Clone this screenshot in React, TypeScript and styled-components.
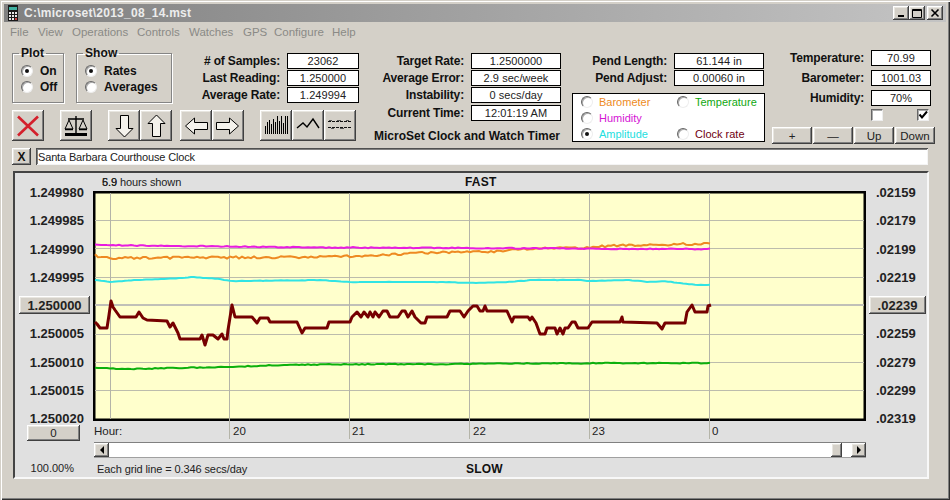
import React from "react";
import styled, { createGlobalStyle } from "styled-components";

const Global = createGlobalStyle`
  html, body { margin: 0; padding: 0; background: #d4d0c8; overflow: hidden; }
  * { box-sizing: border-box; }
  body { font-family: "Liberation Sans", Arial, sans-serif; font-size: 11px; color: #111; }
`;

const raised = `box-shadow: inset -1px -1px #404040, inset 1px 1px #fff, inset -2px -2px #808080, inset 2px 2px #e8e6e0;`;
const sunken = `box-shadow: inset 1px 1px #505050, inset -1px -1px #f4f4f4, inset 2px 2px #808080;`;

const Win = styled.div`
  width: 950px; height: 500px; padding: 4px 0 0 4px; background: #d4d0c8; overflow: hidden;
  box-shadow: inset 1px 1px #d4d0c8, inset 2px 2px #fff, inset -1px -1px #303030, inset -2px -2px #808080;
`;
const TitleBar = styled.div`
  width: 942px; height: 18px; display: flex; align-items: center; padding: 0 3px 0 3px;
  background: linear-gradient(90deg, #808080, #c4c4c4);
`;
const TitleText = styled.span`
  margin-left: 5px; flex: 1; color: #ececec; font-weight: 700; font-size: 12px; letter-spacing: .25px;
`;
const WinBtn = styled.button<{ $ml?: number }>`
  width: 16px; height: 14px; margin-left: ${p => p.$ml ?? 0}px; padding: 0; border: 0; background: #d4d0c8; ${raised}
  display: flex; align-items: center; justify-content: center;
`;
const MenuBar = styled.div`
  height: 19px; display: flex; align-items: center; margin-left: 6px; color: #8a8a86; font-size: 11.5px;
`;
const MenuItem = styled.span<{ $w: number }>` width: ${p => p.$w}px; `;

const Top = styled.div`
  height: 107px; padding-top: 9px; padding-left: 8px; display: flex; align-items: flex-start;
`;
const LeftCol = styled.div` width: 347px; padding-top: 3px; `;
const FormRow = styled.div` display: flex; align-items: flex-start; `;
const Group = styled.fieldset<{ $w: number }>`
  width: ${p => p.$w}px; height: 56px; margin: -6px 12px 0 0; padding: 3px 0 0 8px; min-width: 0;
  border: 1px solid #858585; box-shadow: 1px 1px #fff, inset 1px 1px #fff;
`;
const Legend = styled.legend`
  margin-left: -2px; padding: 0 2px; font-weight: 700; font-size: 12px; line-height: 13px; letter-spacing: .1px;
`;
const RadioRow = styled.label`
  display: flex; align-items: center; gap: 7px; height: 16px; font-weight: 700; font-size: 12px;
`;
const Radio = styled.span<{ $on?: boolean }>`
  width: 12px; height: 12px; border-radius: 50%; background: #fff; flex: none; display: flex; align-items: center; justify-content: center;
  border: 1px solid; border-color: #666 #eee #eee #666; box-shadow: inset 1px 1px #aaa;
  &::after { content: ""; width: 4px; height: 4px; border-radius: 50%; background: ${p => (p.$on ? "#111" : "transparent")}; }
`;
const Stats = styled.div` margin-left: -12px; flex: 1; `;
const Field = styled.div<{ $mt?: number }>`
  display: flex; justify-content: flex-end; align-items: center; gap: 7px; height: 16px; margin-top: ${p => p.$mt ?? 0}px;
`;
const Label = styled.span` font-weight: 700; font-size: 12px; white-space: nowrap; letter-spacing: -.15px; padding-bottom: 1px; `;
const Value = styled.span<{ $w: number }>`
  width: ${p => p.$w}px; height: 16px; line-height: 14px; border: 1px solid #000; background: #fff; text-align: center; font-size: 11px; letter-spacing: .05px; color: #222;
`;
const Tools = styled.div` display: flex; margin-top: 7px; `;
const ToolBtn = styled.button<{ $ml?: number }>`
  width: 32px; height: 31px; padding: 0; border: 0; background: #d4d0c8; margin-left: ${p => p.$ml ?? 0}px; display: block; ${raised}
  svg { display: block; }
`;
const MidCol = styled.div` width: 187px; margin-left: 15px; padding-top: 3px; `;
const Heading = styled.div` margin-top: 8px; font-weight: 700; font-size: 12px; line-height: 14px; white-space: nowrap; `;
const PendCol = styled.div` width: 193px; margin-left: 11px; padding-top: 3px; `;
const PendField = styled(Field)` margin-right: 1px; `;
const ChannelBox = styled.div`
  margin-top: 7px; height: 49px; border: 1px solid #000; background: #fff; padding-left: 8px;
  display: grid; grid-template-columns: 96px 1fr; grid-auto-rows: 16px;
`;
const Channel = styled.label<{ $c: string }>`
  display: flex; align-items: center; gap: 6px; color: ${p => p.$c}; font-size: 11px;
`;
const EnvCol = styled.div` width: 163px; margin-left: 7px; `;
const EnvField = styled(Field)` margin-bottom: 4px; padding-right: 0; justify-content: flex-start; `;
const EnvLabel = styled(Label)` width: 92px; text-align: right; `;
const Checks = styled.div` display: flex; gap: 34px; margin: -1px 0 0 99px; `;
const Check = styled.span`
  width: 12px; height: 12px; background: #fff; border: 1px solid; border-color: #666 #eee #eee #666; box-shadow: inset 1px 1px #aaa; display: flex;
`;
const EnvBtns = styled.div` display: flex; gap: 1px; margin-top: 6px; `;
const EnvBtn = styled.button`
  width: 40px; height: 17px; padding: 0; border: 0; background: #d4d0c8; font: 11.5px "Liberation Sans", Arial, sans-serif; color: #222; ${raised}
`;

const NameRow = styled.div` display: flex; gap: 5px; padding-left: 8px; `;
const SmallBtn = styled.button`
  width: 19px; height: 17px; padding: 0; border: 0; background: #d4d0c8; font: 700 12px "Liberation Sans", Arial, sans-serif; color: #111; ${raised}
`;
const NameInput = styled.div`
  width: 892px; height: 17px; background: #fff; line-height: 19px; padding-left: 2px; font-size: 11px; letter-spacing: -.15px; color: #222; ${sunken}
`;

const Panel = styled.div`
  width: 916px; height: 308px; margin: 6px 0 0 9px; background: #e0e0e0; display: flex;
  border: 2px solid; border-color: #444 #f8f8f8 #f8f8f8 #444;
`;
const AxisLeft = styled.div`
  width: 78px; padding: 11px 9px 0 0; display: flex; flex-direction: column; align-items: flex-end; gap: 12.25px;
  & > * { flex: none; }
`;
const AxisRight = styled.div`
  width: 61px; padding: 11px 0 0 10px; display: flex; flex-direction: column; align-items: flex-start; gap: 12.25px;
  & > * { flex: none; }
`;
const Tick = styled.div` height: 16px; line-height: 18px; font-weight: 700; font-size: 13px; color: #222; `;
const ScaleBtn = styled.button<{ $w: number; $mr?: number; $ml?: number }>`
  width: ${p => p.$w}px; height: 18px; margin: -1px ${p => p.$mr ?? 0}px -1px ${p => p.$ml ?? 0}px; padding: 0; border: 0;
  background: #d4d0c8; font: 700 13px "Liberation Sans", Arial, sans-serif; color: #222; ${raised}
`;
const ZeroBtn = styled.button`
  width: 53px; height: 16px; margin: -13px 4px 0 0; padding: 0; border: 0; background: #d4d0c8; font: 11.5px "Liberation Sans", Arial, sans-serif; color: #222; ${raised}
`;
const Percent = styled.div` margin: 8px 10px 0 0; font-size: 11px; color: #222; `;
const Center = styled.div` width: 773px; `;
const Band = styled.div` height: 18px; display: flex; align-items: center; `;
const BandLeft = styled.div<{ $w: number; $pl: number }>` width: ${p => p.$w}px; padding-left: ${p => p.$pl}px; font-size: 11px; letter-spacing: -.1px; color: #222; `;
const Bold = styled.span` font-weight: 700; font-size: 12px; letter-spacing: .2px; `;
const Overdrawn = styled.span`
  position: relative;
  &::after { content: "6.9"; position: absolute; left: 0; top: 0; }
`;
const PlotSvg = styled.svg` display: block; overflow: visible; `;
const Hours = styled.div` height: 21px; display: flex; align-items: center; padding: 0 0 2px 1px; font-size: 11.5px; color: #222; `;
const Hour = styled.span<{ $w: number }>` width: ${p => p.$w}px; `;
const Scroll = styled.div`
  height: 16px; margin-left: 1px; display: flex; background: #fff; border-top: 1px solid #808080; border-bottom: 1px solid #a0a0a0;
`;
const ScrollBtn = styled.button`
  width: 15px; height: 14px; padding: 0; border: 0; background: #d4d0c8; display: flex; align-items: center; justify-content: center; ${raised}
`;
const Thumb = styled.div` width: 11px; background: #d4d0c8; ${raised} `;
const Spring = styled.div` flex: 1; `;
const Slack = styled.div` width: 9px; `;
const Footer = styled(Band)` margin-top: 2px; `;

/* ---- chart data ---- */
type P = [number, number];
const maroon: P[] = [[95,322],[97,324],[100,328],[107,328],[109,315],[111,301],[113,307],[115,310],[120,317],[136,317],[139,312],[143,318],[147,320],[167,321],[170,327],[173,323],[178,333],[180,339],[200,339],[202,335],[205,345],[208,335],[213,335],[218,339],[222,334],[224,339],[227,339],[228,330],[232,305],[235,317],[252,317],[257,323],[260,318],[268,318],[270,322],[297,322],[302,333],[305,328],[327,328],[329,322],[350,322],[352,317],[357,312],[361,317],[364,312],[368,317],[370,312],[373,317],[375,312],[379,317],[383,311],[387,311],[390,317],[398,317],[402,311],[405,311],[408,317],[412,311],[415,317],[421,323],[425,323],[427,317],[447,317],[450,311],[460,311],[464,317],[468,311],[473,306],[477,306],[480,311],[483,311],[485,306],[487,311],[507,311],[512,322],[514,317],[528,317],[530,320],[532,317],[536,323],[540,334],[545,334],[547,328],[555,328],[557,334],[560,328],[563,334],[565,328],[568,328],[572,322],[575,322],[578,328],[588,328],[592,322],[620,322],[622,317],[623,322],[657,323],[662,329],[665,323],[685,323],[687,312],[692,305],[695,312],[707,312],[708,306],[711,305]];
const magentaA: P[] = [[95,245],[320,247.5],[480,248],[640,249],[711,249]];
const orangeA: P[] = [[95,255],[100,258],[320,257],[353,256],[387,255],[420,253],[453,252],[487,252],[520,249],[553,248],[587,248],[607,246],[640,245],[711,243.5]];
const cyanA: P[] = [[95,280],[110,282],[133,280],[167,279],[193,277],[220,279],[230,281],[243,281],[320,280],[347,282],[380,282],[443,282],[470,283],[507,282],[533,280],[580,280],[587,281],[630,280],[650,282],[663,281],[697,285],[711,285]];
const greenA: P[] = [[95,368],[133,369],[167,368],[230,367],[283,365],[320,364.5],[640,363],[711,363]];

function jitter(anchors: P[], amp: number, seed: number): string {
  const out: string[] = [];
  let s = seed;
  for (let x = 95; x <= 711; x += 3) {
    const i = anchors.findIndex((a, k) => k < anchors.length - 1 && x >= a[0] && x <= anchors[k + 1][0]);
    const [a, b] = [anchors[i], anchors[i + 1]];
    const y = a[1] + ((b[1] - a[1]) * (x - a[0])) / (b[0] - a[0]);
    s = (s * 16807) % 2147483647;
    const n = (s % 1000) / 1000 - 0.5;
    out.push(`${x},${(y + n * amp * 2).toFixed(1)}`);
  }
  return out.join(" ");
}
const pts = (p: P[]) => p.map(q => q.join(",")).join(" ");
const hLines = [220, 248, 277, 334, 362, 390];
const vLines: [number, number][] = [[110, 419], [229, 439], [349, 439], [469, 439], [589, 439], [709, 439]];

const Plot = () => (
  <PlotSvg width={773} height={230} viewBox="93 191 773 230">
    <rect x={94.25} y={192.25} width={770.5} height={227.5} fill="#ffffcc" stroke="#000" strokeWidth={2.5} />
    {hLines.map(y => <line key={y} x1={95} x2={864} y1={y + .5} y2={y + .5} stroke="#bcbcac" />)}
    <line x1={95} x2={864} y1={305} y2={305} stroke="#c0c0b8" strokeWidth={2} />
    {vLines.map(([x, e]) => <line key={x} x1={x + .5} x2={x + .5} y1={193} y2={e} stroke="#b4b4a8" />)}
    <polyline points={jitter(orangeA, 1.1, 77)} fill="none" stroke="#ee8a22" strokeWidth={2} />
    <polyline points={jitter(magentaA, .5, 31)} fill="none" stroke="#e81ce0" strokeWidth={2} />
    <polyline points={jitter(cyanA, .2, 55)} fill="none" stroke="#30e4e4" strokeWidth={2} />
    <polyline points={jitter(greenA, .45, 19)} fill="none" stroke="#0cb00c" strokeWidth={2} />
    <polyline points={pts(maroon)} fill="none" stroke="#760000" strokeWidth={3} strokeLinejoin="round" />
  </PlotSvg>
);

const Ico = ({ children }: { children: React.ReactNode }) => <svg width={32} height={31} viewBox="0 0 32 31">{children}</svg>;
const barH = [8, 12, 14, 10, 15, 12, 18, 13, 18, 11, 18, 18];

const LegendRows = ({ items }: { items: [string, boolean][] }) => (
  <>{items.map(([t, on]) => <RadioRow key={t}><Radio $on={on} />{t}</RadioRow>)}</>
);

export default function App() {
  return (
    <Win>
      <Global />
      <TitleBar>
        <svg width={12} height={16} viewBox="0 0 12 16">
          <rect x={1} y={0} width={10} height={16} fill="#1a1a1a" />
          <rect x={2} y={2} width={8} height={3} fill="#40b0a0" />
          {[7, 10, 13].map(y => [2, 5, 8].map(x => <rect key={`${x}${y}`} x={x} y={y} width={2} height={2} fill={y === 13 && x === 8 ? "#d04040" : "#e8e8e8"} />))}
        </svg>
        <TitleText>C:\microset\2013_08_14.mst</TitleText>
        <WinBtn><svg width={10} height={10} viewBox="0 0 10 10"><rect x={2} y={7} width={6} height={2} fill="#000" /></svg></WinBtn>
        <WinBtn><svg width={10} height={10} viewBox="0 0 10 10"><path d="M.5 1.5h9v8h-9z M.5 2.5h9" fill="none" stroke="#000" /></svg></WinBtn>
        <WinBtn $ml={2}><svg width={10} height={10} viewBox="0 0 10 10"><path d="M1.5 1.5l7 7M8.5 1.5l-7 7" stroke="#000" strokeWidth={1.6} /></svg></WinBtn>
      </TitleBar>
      <MenuBar>
        <MenuItem $w={28}>File</MenuItem>
        <MenuItem $w={34}>View</MenuItem>
        <MenuItem $w={65}>Operations</MenuItem>
        <MenuItem $w={52}>Controls</MenuItem>
        <MenuItem $w={54}>Watches</MenuItem>
        <MenuItem $w={31}>GPS</MenuItem>
        <MenuItem $w={58}>Configure</MenuItem>
        <MenuItem $w={30}>Help</MenuItem>
      </MenuBar>

      <Top>
        <LeftCol>
          <FormRow>
            <Group $w={52}>
              <Legend>Plot</Legend>
              <LegendRows items={[["On", true], ["Off", false]]} />
            </Group>
            <Group $w={96}>
              <Legend>Show</Legend>
              <LegendRows items={[["Rates", true], ["Averages", false]]} />
            </Group>
            <Stats>
              <Field><Label># of Samples:</Label><Value $w={72}>23062</Value></Field>
              <Field $mt={1}><Label>Last Reading:</Label><Value $w={72}>1.250000</Value></Field>
              <Field $mt={1}><Label>Average Rate:</Label><Value $w={72}>1.249994</Value></Field>
            </Stats>
          </FormRow>
          <Tools>
            <ToolBtn><Ico><path d="M6 6.5L26 25.5M26 6.5L6 25.5" stroke="#d4202c" strokeWidth={2.6} /></Ico></ToolBtn>
            <ToolBtn $ml={16}>
              <Ico>
                <path d="M16 6v17M8 9h16" stroke="#000" strokeWidth={1.4} />
                <path d="M9 10l-4 9h8zM23 10l-4 9h8z" fill="none" stroke="#000" />
                <path d="M5 19.5h8M19 19.5h8" stroke="#000" strokeWidth={1.5} />
                <path d="M5 24.5h22" stroke="#000" strokeWidth={3} />
              </Ico>
            </ToolBtn>
            <ToolBtn $ml={16}><Ico><path d="M12.5 5.5h8v13h4.5l-8.5 8.5-8.5-8.5h4.5z" fill="#f4f2ec" stroke="#000" /></Ico></ToolBtn>
            <ToolBtn><Ico><path d="M12.5 26.5h8v-13h4.5l-8.5-8.5-8.5 8.5h4.5z" fill="#f4f2ec" stroke="#000" /></Ico></ToolBtn>
            <ToolBtn $ml={8}><Ico><path d="M27.5 12.5v7h-13v4.5l-9-8 9-8v4.5z" fill="#f4f2ec" stroke="#000" /></Ico></ToolBtn>
            <ToolBtn><Ico><path d="M4.5 12.5v7h13v4.5l9-8-9-8v4.5z" fill="#f4f2ec" stroke="#000" /></Ico></ToolBtn>
            <ToolBtn $ml={16}>
              <Ico>{barH.map((h, i) => <line key={i} x1={5.5 + i * 2} x2={5.5 + i * 2} y1={24} y2={24 - h} stroke="#000" />)}</Ico>
            </ToolBtn>
            <ToolBtn><Ico><polyline points="5,18 11,13 15,17 21,9 27,18" fill="none" stroke="#000" strokeWidth={1.4} /></Ico></ToolBtn>
            <ToolBtn>
              <Ico>
                <path d="M4 11.5h24M4 17.5h24" fill="none" stroke="#111" strokeDasharray="3 1" />
                <path d="M5 10.5h3M13 10.5h4M22 10.5h3M7 18.5h3M16 18.5h4" fill="none" stroke="#555" />
              </Ico>
            </ToolBtn>
          </Tools>
        </LeftCol>

        <MidCol>
          <Field><Label>Target Rate:</Label><Value $w={90}>1.2500000</Value></Field>
          <Field $mt={1}><Label>Average Error:</Label><Value $w={90}>2.9 sec/week</Value></Field>
          <Field $mt={1}><Label>Instability:</Label><Value $w={90}>0 secs/day</Value></Field>
          <Field $mt={2}><Label>Current Time:</Label><Value $w={90}>12:01:19 AM</Value></Field>
          <Heading>MicroSet Clock and Watch Timer</Heading>
        </MidCol>

        <PendCol>
          <PendField><Label>Pend Length:</Label><Value $w={90}>61.144 in</Value></PendField>
          <PendField $mt={1}><Label>Pend Adjust:</Label><Value $w={90}>0.00060 in</Value></PendField>
          <ChannelBox>
            <Channel $c="#ee8a22"><Radio />Barometer</Channel>
            <Channel $c="#10a810"><Radio />Temperature</Channel>
            <Channel $c="#d414d4"><Radio />Humidity</Channel>
            <span />
            <Channel $c="#22dede"><Radio $on />Amplitude</Channel>
            <Channel $c="#700010"><Radio />Clock rate</Channel>
          </ChannelBox>
        </PendCol>

        <EnvCol>
          <EnvField><EnvLabel>Temperature:</EnvLabel><Value $w={60}>70.99</Value></EnvField>
          <EnvField><EnvLabel>Barometer:</EnvLabel><Value $w={60}>1001.03</Value></EnvField>
          <EnvField><EnvLabel>Humidity:</EnvLabel><Value $w={60}>70%</Value></EnvField>
          <Checks>
            <Check />
            <Check><svg width={10} height={10} viewBox="0 0 10 10"><path d="M1.5 4.5l2.5 3 5-6" fill="none" stroke="#000" strokeWidth={2} /></svg></Check>
          </Checks>
          <EnvBtns>
            <EnvBtn>+</EnvBtn>
            <EnvBtn>—</EnvBtn>
            <EnvBtn>Up</EnvBtn>
            <EnvBtn>Down</EnvBtn>
          </EnvBtns>
        </EnvCol>
      </Top>

      <NameRow>
        <SmallBtn>X</SmallBtn>
        <NameInput>Santa Barbara Courthouse Clock</NameInput>
      </NameRow>

      <Panel>
        <AxisLeft>
          <Tick>1.249980</Tick>
          <Tick>1.249985</Tick>
          <Tick>1.249990</Tick>
          <Tick>1.249995</Tick>
          <ScaleBtn $w={71} $mr={-6}>1.250000</ScaleBtn>
          <Tick>1.250005</Tick>
          <Tick>1.250010</Tick>
          <Tick>1.250015</Tick>
          <Tick>1.250020</Tick>
          <ZeroBtn>0</ZeroBtn>
          <Percent>100.00%</Percent>
        </AxisLeft>
        <Center>
          <Band>
            <BandLeft $w={372} $pl={9}><Overdrawn>5.9</Overdrawn> hours shown</BandLeft>
            <Bold>FAST</Bold>
          </Band>
          <Plot />
          <Hours>
            <Hour $w={139}>Hour:</Hour>
            <Hour $w={119}>20</Hour>
            <Hour $w={121}>21</Hour>
            <Hour $w={119}>22</Hour>
            <Hour $w={120}>23</Hour>
            <Hour $w={20}>0</Hour>
          </Hours>
          <Scroll>
            <ScrollBtn><svg width={6} height={8} viewBox="0 0 6 8"><path d="M5 0v8L1 4z" fill="#000" /></svg></ScrollBtn>
            <Spring />
            <Thumb />
            <Slack />
            <ScrollBtn><svg width={6} height={8} viewBox="0 0 6 8"><path d="M1 0v8l4-4z" fill="#000" /></svg></ScrollBtn>
          </Scroll>
          <Footer>
            <BandLeft $w={373} $pl={4}>Each grid line = 0.346 secs/day</BandLeft>
            <Bold>SLOW</Bold>
          </Footer>
        </Center>
        <AxisRight>
          <Tick>.02159</Tick>
          <Tick>.02179</Tick>
          <Tick>.02199</Tick>
          <Tick>.02219</Tick>
          <ScaleBtn $w={57} $ml={-7}>.02239</ScaleBtn>
          <Tick>.02259</Tick>
          <Tick>.02279</Tick>
          <Tick>.02299</Tick>
          <Tick>.02319</Tick>
        </AxisRight>
      </Panel>
    </Win>
  );
}
